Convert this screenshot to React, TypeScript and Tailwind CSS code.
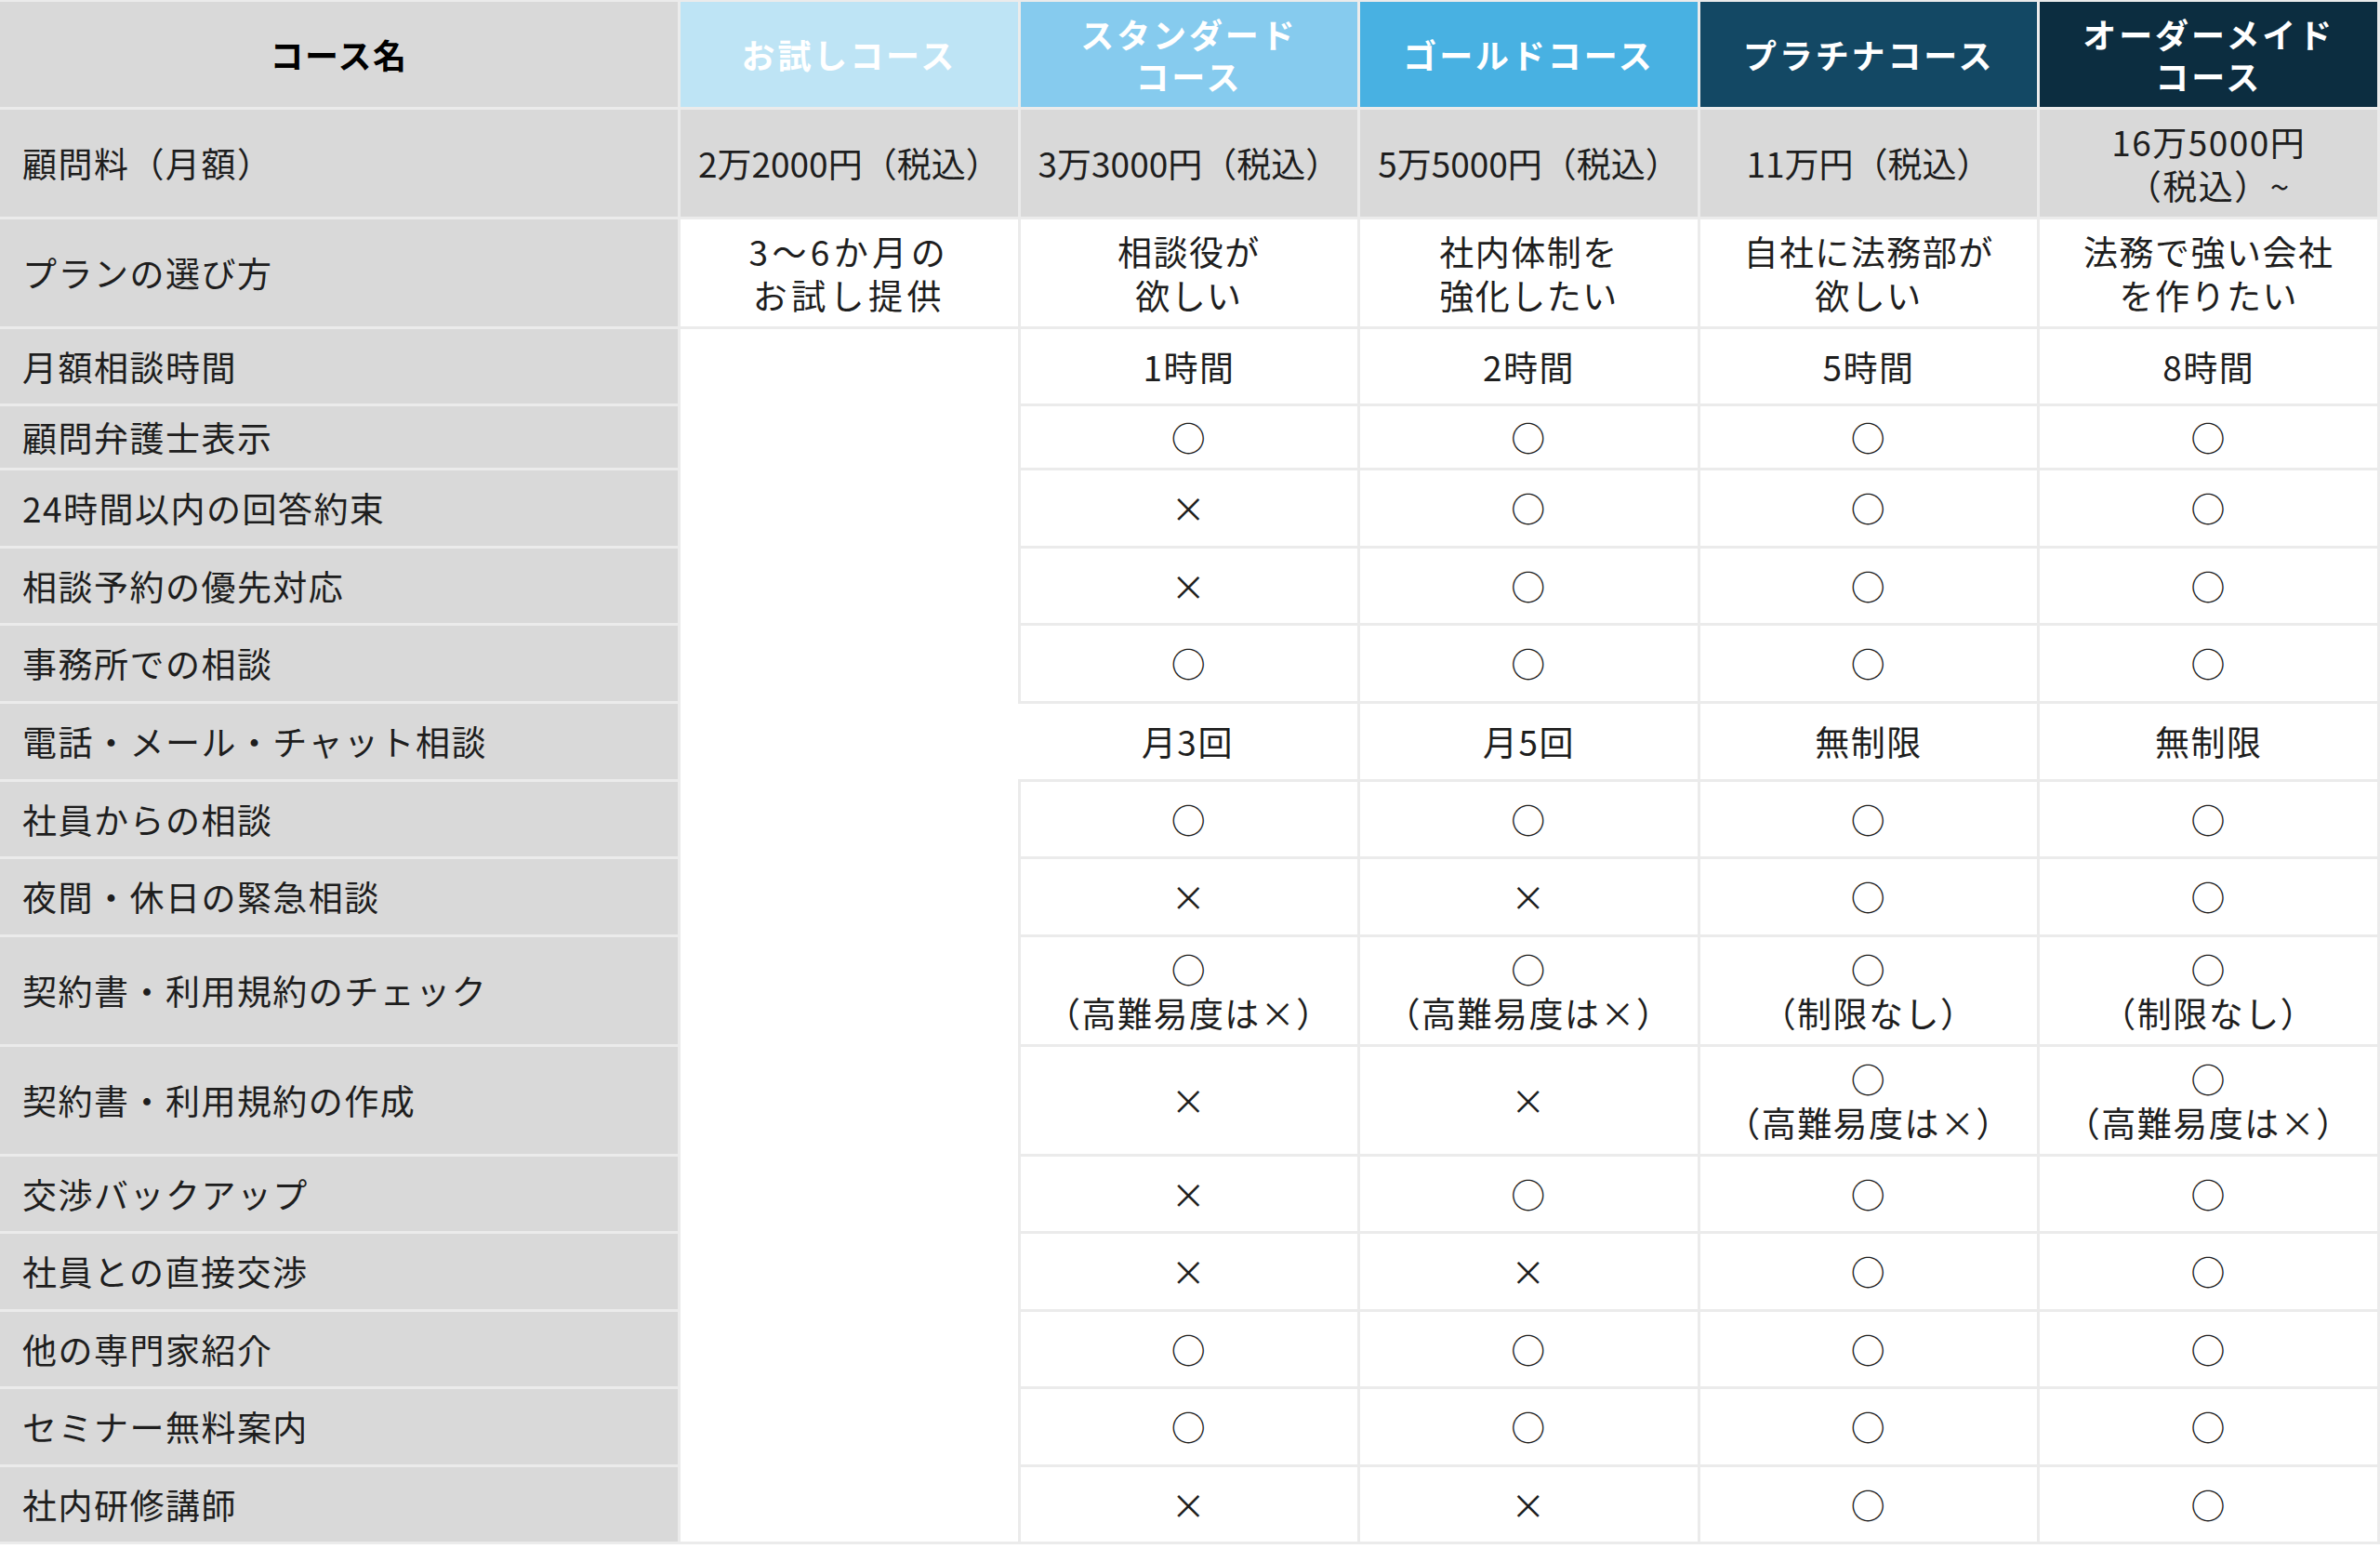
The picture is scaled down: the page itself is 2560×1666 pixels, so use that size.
import React from 'react';

const heads = [
  { label: ['お試しコース'], cls: 'bg-[#bee4f5]' },
  { label: ['スタンダード', 'コース'], cls: 'bg-[#86cbee]' },
  { label: ['ゴールドコース'], cls: 'bg-[#48b1e2]' },
  { label: ['プラチナコース'], cls: 'bg-[#134864]' },
  { label: ['オーダーメイド', 'コース'], cls: 'bg-[#0c2d40]' },
];

const O = '○';
const X = '×';

// [label, height, trial?, standard, gold, platinum, custom]
const rows: [string, string, string[] | null, string[], string[], string[], string[]][] = [
  ['月額相談時間', 'h-[83px]', null, ['1時間'], ['2時間'], ['5時間'], ['8時間']],
  ['顧問弁護士表示', 'h-[69px]', null, [O], [O], [O], [O]],
  ['24時間以内の回答約束', 'h-[84px]', null, [X], [O], [O], [O]],
  ['相談予約の優先対応', 'h-[83px]', null, [X], [O], [O], [O]],
  ['事務所での相談', 'h-[84px]', null, [O], [O], [O], [O]],
  ['電話・メール・チャット相談', 'h-[84px]', null, ['月3回'], ['月5回'], ['無制限'], ['無制限']],
  ['社員からの相談', 'h-[83px]', null, [O], [O], [O], [O]],
  ['夜間・休日の緊急相談', 'h-[84px]', null, [X], [X], [O], [O]],
  ['契約書・利用規約のチェック', 'h-[118px]', null, [O, '（高難易度は×）'], [O, '（高難易度は×）'], [O, '（制限なし）'], [O, '（制限なし）']],
  ['契約書・利用規約の作成', 'h-[118px]', null, [X], [X], [O, '（高難易度は×）'], [O, '（高難易度は×）']],
  ['交渉バックアップ', 'h-[83px]', null, [X], [O], [O], [O]],
  ['社員との直接交渉', 'h-[84px]', null, [X], [X], [O], [O]],
  ['他の専門家紹介', 'h-[83px]', null, [O], [O], [O], [O]],
  ['セミナー無料案内', 'h-[84px]', null, [O], [O], [O], [O]],
  ['社内研修講師', 'h-[83px]', null, [X], [X], [O], [O]],
];

const cell = 'flex flex-col items-center justify-center text-center leading-[1.25] border-r-[3px] border-b-[3px] border-[#ebebeb]';

export default function App() {
  return (
    <div
      className="w-[2560px] h-[1666px] bg-white text-[37px] tracking-[0.04em] text-[#1e1e1e] border-t-[2px] border-[#ebebeb]"
      style={{ fontFamily: '"Noto Sans CJK JP", "Noto Sans", sans-serif' }}
    >
      <div className="grid grid-cols-[732px_repeat(5,1fr)]">
        {/* header */}
        <div className={`${cell} h-[116px] bg-[#d9d9d9] font-bold text-[36px] text-black`}>コース名</div>
        {heads.map((h, i) => (
          <div key={i} className={`${cell} h-[116px] ${h.cls} text-white font-bold text-[36px] tracking-[0.08em] leading-[1.3]`}>
            {h.label.map((l) => <span key={l}>{l}</span>)}
          </div>
        ))}

        {/* fee */}
        <div className={`${cell} h-[118px] bg-[#d9d9d9] items-start pl-6`}>顧問料（月額）</div>
        {['2万2000円（税込）', '3万3000円（税込）', '5万5000円（税込）', '11万円（税込）'].map((t) => (
          <div key={t} className={`${cell} h-[118px] bg-[#d9d9d9] whitespace-nowrap tracking-normal`}>{t}</div>
        ))}
        <div className={`${cell} h-[118px] bg-[#d9d9d9]`}>
          <span>16万5000円</span>
          <span>（税込）~</span>
        </div>

        {/* plan */}
        <div className={`${cell} h-[118px] bg-[#d9d9d9] items-start pl-6`}>プランの選び方</div>
        {[
          ['3～6か月の', 'お試し提供'],
          ['相談役が', '欲しい'],
          ['社内体制を', '強化したい'],
          ['自社に法務部が', '欲しい'],
          ['法務で強い会社', 'を作りたい'],
        ].map((t, i) => (
          <div key={i} className={`${cell} h-[118px] ${i === 0 ? 'tracking-[0.12em]' : ''}`}>
            {t.map((l) => <span key={l}>{l}</span>)}
          </div>
        ))}

        {/* feature rows; trial column is one merged white cell */}
        {rows.map((r, ri) => (
          <React.Fragment key={r[0]}>
            <div className={`${cell} ${r[1]} bg-[#d9d9d9] items-start pl-6`} style={{ gridColumn: 1, gridRow: ri + 4 }}>
              {r[0]}
            </div>
            {[r[3], r[4], r[5], r[6]].map((v, ci) => (
              <div
                key={ci}
                className={`${cell} ${r[1]} ${ci === 0 && r[0].startsWith('電話') ? '-ml-[3px] bg-white relative' : ''}`}
                style={{ gridColumn: ci + 3, gridRow: ri + 4 }}
              >
                {v.map((l, k) => <span key={k}>{l}</span>)}
              </div>
            ))}
          </React.Fragment>
        ))}
        <div className={`${cell}`} style={{ gridColumn: 2, gridRow: `4 / span ${rows.length}` }} />
      </div>
    </div>
  );
}
